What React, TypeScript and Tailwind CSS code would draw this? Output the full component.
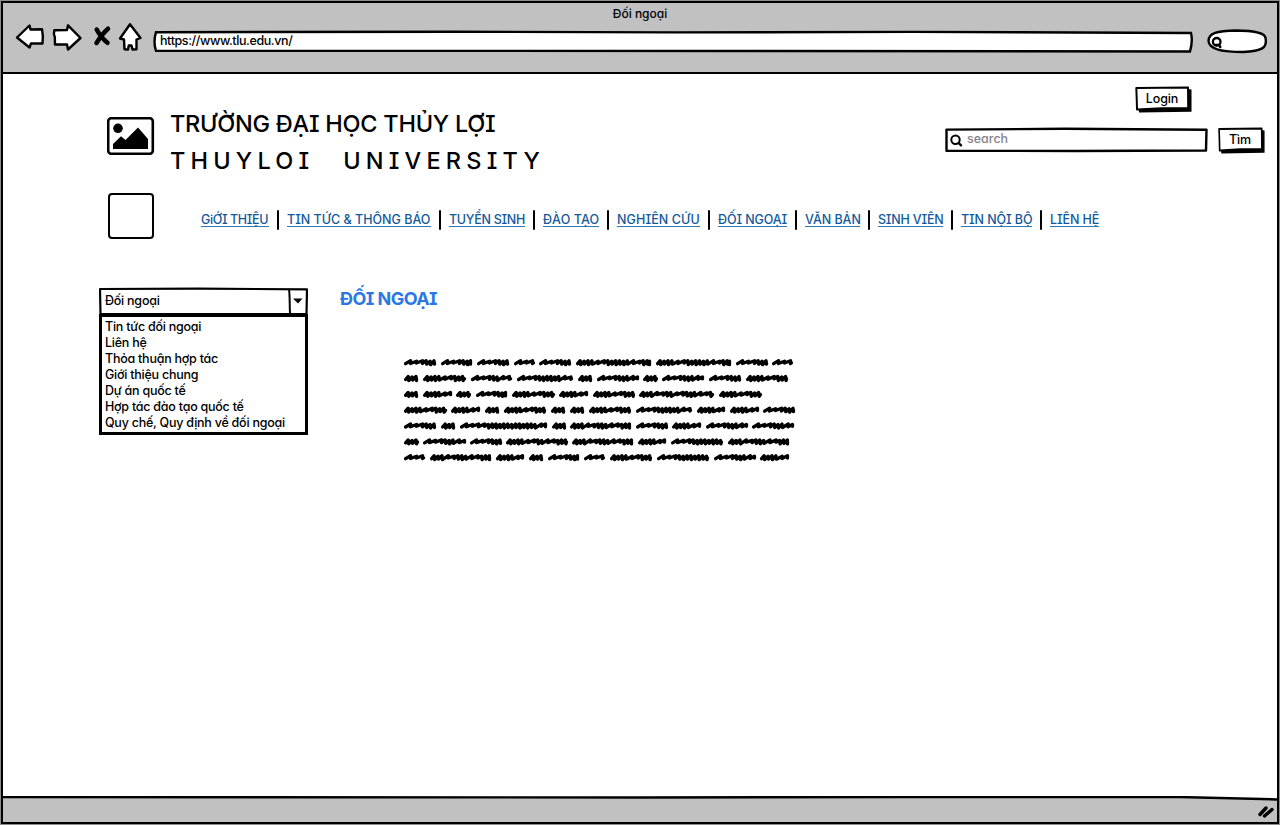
import React from "react";

const font = "font-medium [font-family:Inter,'Noto_Sans',sans-serif] [font-feature-settings:'cv11','cv08','calt'_0]";

const navItems: { label: string; cls: string }[] = [
  { label: "GiỚI THIỆU", cls: "w-[68px] tracking-[-0.4px]" },
  { label: "TIN TỨC & THÔNG BÁO", cls: "w-[144px] tracking-[0px]" },
  { label: "TUYỂN SINH", cls: "w-[76px] tracking-[-0.3px]" },
  { label: "ĐÀO TẠO", cls: "w-[56px] tracking-[0.1px]" },
  { label: "NGHIÊN CỨU", cls: "w-[83px] tracking-[0.1px]" },
  { label: "ĐỐI NGOẠI", cls: "w-[69px] tracking-[-0.1px]" },
  { label: "VĂN BẢN", cls: "w-[55px] tracking-[-0.05px]" },
  { label: "SINH VIÊN", cls: "w-[65px] tracking-[-0.2px]" },
  { label: "TIN NỘI BỘ", cls: "w-[71px] tracking-[-0.1px]" },
  { label: "LIÊN HỆ", cls: "w-[49px] tracking-[-0.1px]" },
];

const options = [
  "Tin tức đối ngoại",
  "Liên hệ",
  "Thỏa thuận hợp tác",
  "Giới thiệu chung",
  "Dự án quốc tế",
  "Hợp tác đào tạo quốc tế",
  "Quy chế, Quy định về đối ngoại",
];

// Each word is [start, width, stroke rhythm]: s = wide strokes, d = tight strokes.
type Word = [number, number, string];
const lines: Word[][] = [
  [[0, 32, "sd"], [37, 31, "sd"], [73, 32, "sd"], [110, 21, "s"], [135, 32, "sd"], [172, 75, "dsddsd"], [252, 75, "dsddsd"], [332, 32, "sd"], [368, 21, "s"]],
  [[0, 14, "d"], [19, 43, "dsd"], [67, 41, "sds"], [113, 56, "sdds"], [174, 14, "d"], [193, 42, "sds"], [239, 15, "d"], [258, 42, "sds"], [305, 32, "sd"], [342, 42, "dsd"]],
  [[0, 14, "d"], [19, 29, "ds"], [52, 15, "d"], [72, 31, "sd"], [108, 43, "dsd"], [155, 29, "ds"], [189, 42, "dsd"], [235, 75, "dsdsdsd"], [315, 43, "dsd"]],
  [[0, 43, "dsd"], [47, 29, "ds"], [81, 14, "d"], [100, 42, "dsd"], [147, 14, "d"], [166, 14, "d"], [185, 42, "dsd"], [232, 56, "sdds"], [293, 28, "ds"], [326, 29, "ds"], [359, 32, "sd"]],
  [[0, 32, "sd"], [37, 14, "d"], [56, 87, "ssdddds"], [148, 14, "d"], [166, 61, "dsdsd"], [232, 32, "sd"], [268, 29, "ds"], [302, 42, "sds"], [348, 42, "sds"]],
  [[0, 15, "d"], [19, 43, "sds"], [66, 32, "sd"], [102, 62, "dsdsd"], [168, 61, "dsdsd"], [234, 28, "ds"], [267, 52, "sdd"], [324, 61, "dsdsd"]],
  [[0, 21, "s"], [26, 61, "dsdsd"], [92, 28, "ds"], [125, 14, "d"], [144, 31, "sd"], [180, 21, "s"], [206, 42, "dsd"], [253, 52, "sdd"], [310, 42, "sds"], [356, 29, "ds"]],
];

function scribble([x, w, rhythm]: Word, cy: number) {
  const start = x + 1.6;
  const end = x + w - 1.5;
  let px = start;
  let d = `M${start} ${cy + 1.2}`;
  let i = 0;
  while (px < end - 1) {
    const at = Math.min(rhythm.length - 1, Math.floor(((px - start) / (end - start)) * rhythm.length));
    const wide = rhythm[at] === "s";
    const step = wide ? 6 : 3.9;
    const top = Math.min(end, px + (wide ? 5 : 2.6));
    const back = Math.min(end, px + step - (wide ? 1.2 : 0.8));
    const up = cy - 1.8 + (i % 3 === 1 ? 0.5 : 0);
    const low = cy + (wide ? 1 : 2.2) - (i % 2 ? 0.5 : 0);
    d += ` L${top.toFixed(1)} ${up.toFixed(1)} L${back.toFixed(1)} ${low.toFixed(1)}`;
    px += step;
    i++;
  }
  return d + ` L${end} ${cy + 0.4}`;
}

function SketchButton({ label, cls }: { label: string; cls: string }) {
  return (
    <button className={"relative flex items-center justify-center text-[12.5px] leading-none tracking-[-0.1px] " + cls}>
      <svg className="absolute inset-0 h-full w-full" viewBox="0 0 57 27" preserveAspectRatio="none">
        <path d="M52 3L56.500 3.500V25.800L4 26.500L3.500 22Z" fill="#000" />
        <path d="M1.300 2L53 1.400L53.200 22L27 22.300L2 23.400L1.700 12Z" fill="#fff" stroke="#000" strokeWidth="2" strokeLinejoin="round" />
      </svg>
      <span className="relative mr-[3px] mb-[1px]">{label}</span>
    </button>
  );
}

function Toolbar() {
  return (
    <header className="flex h-[69px] flex-col bg-[#c1c1c1]">
      <div className="h-[18px] pt-[3px] text-center text-[12px] leading-[16px]">Đối ngoại</div>
      <div className="flex h-[44px] pl-[12px]">
        <svg className="h-[32px] w-[132px] shrink-0" viewBox="15 21 132 32" fill="#fff" stroke="#000" strokeWidth="2.400" strokeLinejoin="round" strokeLinecap="round">
          <path d="M17 37.500L29.500 25.500L30.500 29.500L42 29.300Q43.500 36 42.500 43.500L31 43.500L29.500 47.500Z" />
          <path d="M80.500 38L68 25.300L67 30L54.300 30.300Q53.300 34 54.800 37L55 44.500L67 44.500L68 49.500Z" />
          <path d="M130 24.300L120 38.500L124 39.500L124.500 49.300L128 49.500L128.800 45.500L131.500 45.500L132.500 49.500L136.500 49.300L136.500 39.500L140.500 38Z" />
          <path d="M96.700 29.500C99 34 104 40 107.500 42.800M108 28.700C103 33 99 39 96.500 43" strokeWidth="4.500" fill="none" />
        </svg>
        <div className="relative mt-[9px] ml-[6px] flex h-[23px] w-[1041px] shrink-0 items-center pl-[7px]">
          <svg className="absolute inset-0 h-full w-full" viewBox="0 0 1041 23" preserveAspectRatio="none">
            <path d="M3 2.200L300 1.700L520 2.400L760 1.900L1038 3Q1040 11 1037 21.500L600 21L3 20.800Q0 12 3 2.200Z" fill="#fff" stroke="#000" strokeWidth="2.400" />
          </svg>
          <span className="relative text-[12.5px] leading-none tracking-[-0.4px]">https://www.tlu.edu.vn/</span>
        </div>
        <svg className="mt-[7px] ml-[12px] h-[26px] w-[62px] shrink-0" viewBox="0 0 62 26">
          <path d="M2.500 13C2.500 5 11 3 30 2.500C47 2.500 59 5 59.500 10C61.500 20 56 23 37 24C18 24 3 22 2.500 13Z" fill="#fff" stroke="#000" strokeWidth="2.400" />
          <circle cx="10.700" cy="13.800" r="3.800" fill="none" stroke="#000" strokeWidth="2.300" />
          <path d="M9 17L13 17L14.300 19" fill="none" stroke="#000" strokeWidth="2.500" strokeLinecap="round" />
        </svg>
      </div>
    </header>
  );
}

export default function App() {
  return (
    <div className={"flex h-[825px] w-[1280px] overflow-hidden bg-[#8c8c8c] p-[1px] text-black " + font}>
      <div className="flex h-full w-full flex-col border-2 border-black bg-white">
        <Toolbar />
        <div className="h-[2px] shrink-0 bg-black" />
        <main className="flex min-h-0 flex-1 flex-col">
          <div className="flex h-[112px]">
            <div className="flex flex-1 pl-[104px]">
              <svg className="mt-[43px] h-[38px] w-[48px]" viewBox="0 0 48 38">
                <rect x="1.200" y="1.200" width="44.600" height="35.600" rx="3" fill="#fff" stroke="#000" strokeWidth="2.600" />
                <circle cx="11" cy="11.300" r="4.800" />
                <path d="M6 32V27L14 19.300L18.500 23L31 10.500L41 22V32Z" />
              </svg>
              <div className="ml-[15px] whitespace-nowrap text-[23.5px]">
                <h1 className="mt-[34px] h-[37px] leading-[32px] tracking-[-0.25px]">TRƯỜNG ĐẠI HỌC THỦY LỢI</h1>
                <div className="whitespace-pre leading-[32px] tracking-[5.2px] [word-spacing:3px]">THUYLOI  UNIVERSITY</div>
              </div>
            </div>
            <div className="flex w-[332px] flex-col">
              <SketchButton label="Login" cls="mt-[12px] ml-[190px] h-[27px] w-[57px]" />
              <div className="mt-[14px] flex">
                <div className="relative flex h-[26px] w-[263px] items-center">
                  <svg className="absolute inset-0 h-full w-full" viewBox="0 0 263 26">
                    <path d="M1.500 2.600L120 1.800L261.500 2.800L261 23.500L130 24L1.500 23.700Z" fill="#fff" stroke="#000" strokeWidth="2.400" strokeLinejoin="round" />
                    <circle cx="10.500" cy="12.800" r="4.200" fill="none" stroke="#000" strokeWidth="2" />
                    <path d="M13.700 16L16 18.300" stroke="#000" strokeWidth="2.400" strokeLinecap="round" />
                  </svg>
                  <span className="relative ml-[22px] mb-[1px] text-[12.500px] leading-none text-[#84848c]">search</span>
                </div>
                <SketchButton label="Tìm" cls="ml-[10px] h-[27px] w-[47px]" />
              </div>
            </div>
          </div>
          <div className="flex h-[60px] items-center pl-[105px]">
            <div className="h-[46px] w-[46px] rounded-[4px] border-2 border-black" />
            <nav className="ml-[47px] mt-[7px] flex items-center">
              {navItems.map((item, i) => (
                <React.Fragment key={item.label}>
                  {i > 0 && <span className="mx-[8px] mt-[1px] h-[20px] w-[2px] shrink-0 rounded-full bg-black" />}
                  <a className={"mb-[1px] h-[15px] whitespace-nowrap border-b border-[#2f77b5] text-[12.500px] leading-[16px] text-[#12599b] " + item.cls}>{item.label}</a>
                </React.Fragment>
              ))}
            </nav>
          </div>
          <section className="mt-[41px] flex pl-[96px]">
            <div className="flex h-[148px] w-[209px] flex-col text-[12.500px] tracking-[-0.24px]">
              <div className="relative flex h-[27px] items-center pl-[6px]">
                <svg className="absolute inset-0 h-full w-full" viewBox="0 0 209 27">
                  <path d="M1 2L100 1.700L208 2.300L207.500 27L1.500 27Z" fill="#fff" stroke="#000" strokeWidth="2.200" strokeLinejoin="round" />
                  <path d="M190 2C191 10 190.500 18 191 26" fill="none" stroke="#000" strokeWidth="2" />
                  <path d="M194 11.500H203.500L199 16.500Z" />
                </svg>
                <span className="relative mt-[1px] leading-none">Đối ngoại</span>
              </div>
              <ul className="h-[121px] border-[3px] border-black pl-[3px] pt-[1px]">
                {options.map((o) => (
                  <li key={o} className="h-[16px] whitespace-nowrap leading-[17px]">{o}</li>
                ))}
              </ul>
            </div>
            <article className="ml-[32px]">
              <h2 className="h-[24px] text-[18px] font-bold leading-[24px] tracking-[-0.55px] text-[#2b78e4]">ĐỐI NGOẠI</h2>
              <svg className="mt-[43px] ml-[64px] h-[112px] w-[395px]" viewBox="0 0 395 112" fill="none" stroke="#000" strokeWidth="3.300" strokeLinecap="round" strokeLinejoin="round">
                {lines.map((words, r) => words.map((word, c) => <path key={r + "-" + c} d={scribble(word, 8.5 + r * 15.83)} />))}
              </svg>
            </article>
          </section>
        </main>
        <footer className="h-[26px] shrink-0">
          <svg className="h-full w-full" viewBox="3 797 1274 26" preserveAspectRatio="none">
            <path d="M1 798L640 798.500L900 798L1180 798L1279 800.500V825H1Z" fill="#c1c1c1" stroke="#000" strokeWidth="2.400" />
            <path d="M1260 815.500L1266 809M1264.500 817L1272 810.500" stroke="#000" strokeWidth="3.400" strokeLinecap="round" />
          </svg>
        </footer>
      </div>
    </div>
  );
}
